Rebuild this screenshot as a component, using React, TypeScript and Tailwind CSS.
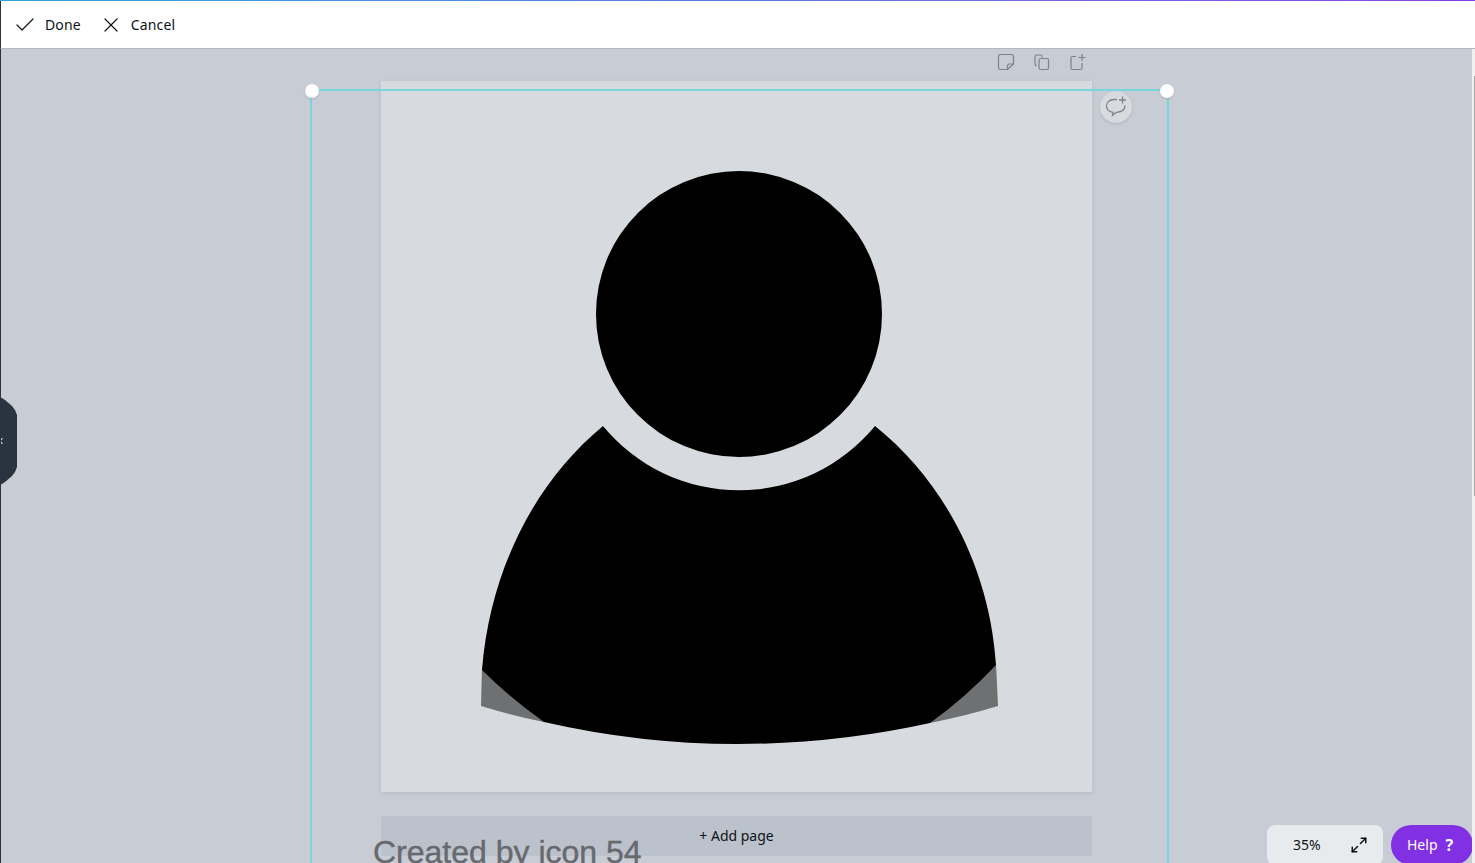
import { Check, ChevronLeft, Maximize2, X } from "lucide-react";

const uiFont = "font-['Noto_Sans','Open_Sans',sans-serif]";

function PersonIcon() {
  return (
    <svg viewBox="381 81 711 711" className="h-full w-full">
      {/* faded corners of the cropped shoulders */}
      <path d="M482 668 L481 706 Q510 715 544 722 L560 700 Z" fill="#6f7072" />
      <path d="M996 663 L998 706 Q965 716 930 723 L915 700 Z" fill="#6f7072" />
      <circle cx="739" cy="314" r="143" fill="#000" />
      <path
        d="M603 426 A176 176 0 0 0 875 426 C945 482 990 570 996 665 Q965 698 930 723 Q835 744 737 744 Q640 744 544 722 Q510 698 482 670 C490 570 535 482 603 426 Z"
        fill="#000"
      />
    </svg>
  );
}

function NoteIcon() {
  return (
    <svg viewBox="0 0 18 18" className="h-[18px] w-[18px]" fill="none" stroke="#7d828b" strokeWidth="1.2">
      <path d="M3.5 1.500h11a2 2 0 0 1 2 2v7.500l-6 5.500h-7a2 2 0 0 1-2-2v-11a2 2 0 0 1 2-2z" />
      <path d="M10.500 16.500v-3.500a2 2 0 0 1 2-2h4" />
    </svg>
  );
}

function CopyIcon() {
  return (
    <svg viewBox="0 0 18 18" className="h-[18px] w-[18px]" fill="none" stroke="#7d828b" strokeWidth="1.2">
      <path d="M4 12.500h-.500a1.500 1.500 0 0 1-1.500-1.500v-7.500a1.500 1.500 0 0 1 1.500-1.500h4a1.500 1.500 0 0 1 1.500 1.500v1" />
      <rect x="6" y="5.500" width="9.500" height="11" rx="1.800" />
    </svg>
  );
}

function AddPageIcon() {
  return (
    <svg viewBox="0 0 18 18" className="h-[18px] w-[18px]" fill="none" stroke="#7d828b" strokeWidth="1.2">
      <path d="M7 3.500H3.500a1.500 1.500 0 0 0-1.500 1.500v10a1.500 1.500 0 0 0 1.500 1.500h8a1.500 1.500 0 0 0 1.500-1.500v-5" />
      <path d="M13 1v7M9.500 4.500h7" />
    </svg>
  );
}

function CommentIcon() {
  return (
    <svg viewBox="0 0 24 24" className="h-6 w-6" fill="none" stroke="#7d828b" strokeWidth="1.3">
      <path d="M13 4.500H10c-4.500 0-7.500 2.800-7.500 6.500 0 3.500 2.800 6 6.500 6.300l-.5 3 4-3c4.500-.3 8.500-2.500 8.500-6.800" />
      <path d="M18.500 1.500v7M15 5h7" />
    </svg>
  );
}

function Handle({ className }: { className: string }) {
  return <div className={`absolute h-3.5 w-3.5 rounded-full bg-white shadow ${className}`} />;
}

export default function App() {
  return (
    <div className={`flex h-[863px] w-[1475px] flex-col overflow-hidden bg-[#c8ccd4] ${uiFont}`}>
      <div className="h-px shrink-0 bg-gradient-to-r from-[#2ea3d8] via-[#5b7fe0] to-[#8b3de8]" />
      <header className="flex h-[48px] shrink-0 items-center border-b border-l border-b-[#b3b7bf] border-l-[#2a3340] bg-white pl-[12px] text-sm text-[#0e1318]">
        <button className="flex items-center gap-[8px] pt-[1px] tracking-[0.01em]">
          <Check size={24} strokeWidth={1.2} />
          Done
        </button>
        <button className="ml-[18px] flex items-center gap-[8px] pt-[1px] tracking-[0.01em]">
          <X size={24} strokeWidth={1.2} />
          Cancel
        </button>
      </header>

      <main className="relative flex flex-1 overflow-hidden border-l border-[#2a3340]">
        <div className="flex flex-1 flex-col items-center pt-[32px] pr-[3px]">
          <div className="relative h-[711px] w-[711px] shrink-0 bg-[#d7dadf] shadow-[0_1px_4px_rgba(60,70,90,0.12)]">
            <PersonIcon />
          </div>
          <button className="mt-6 h-10 w-[711px] shrink-0 rounded-[3px] bg-[#bcc2cb] text-sm text-[#0e1318]">
            + Add page
          </button>
        </div>

        {/* page actions */}
        <div className="absolute left-[996px] top-[4px] flex gap-[18px]">
          <NoteIcon />
          <CopyIcon />
          <AddPageIcon />
        </div>

        {/* selection frame */}
        <div className="absolute left-[309px] top-[40px] h-[900px] w-[859px] border-2 border-[#78d7dd]">
          <Handle className="-left-[7px] -top-[7px]" />
          <Handle className="-right-[7px] -top-[7px]" />
        </div>

        <div className="absolute left-[1099px] top-[42px] flex h-8 w-8 items-center justify-center rounded-full bg-[#d7dadf] shadow-sm">
          <CommentIcon />
        </div>

        <div className="absolute left-[372px] top-[784px] font-['Liberation_Sans',sans-serif] text-[32px] leading-[38px] whitespace-nowrap text-[#66696e] [-webkit-text-stroke:0.4px_#66696e]">
          Created by icon 54
        </div>

        {/* sidebar collapse tab */}
        <div className="absolute -left-px top-[348px] flex h-[88px] w-[17px] items-center bg-[#2a3340] [clip-path:polygon(0_0,5px_3px,12px_9px,15px_13px,17px_18px,17px_70px,15px_75px,12px_79px,5px_85px,0_88px)]">
          <ChevronLeft size={10} strokeWidth={2.5} color="#fff" className="-ml-[4px]" />
        </div>

        {/* zoom + help */}
        <div className="absolute -bottom-[2px] left-[1266px] flex h-[40px] w-[116px] items-center rounded-lg bg-[#e8ebee] pl-[26px] text-sm text-[#0e1318]">
          35%
          <Maximize2 size={18} strokeWidth={2} className="ml-[29px]" />
        </div>
        <div className="absolute -bottom-[2px] left-[1390px] flex h-[40px] w-[82px] items-center rounded-[20px] bg-[#8230e4] pl-[16px] text-sm text-white">
          Help
          <span className="ml-2 text-base leading-none font-bold">?</span>
        </div>

        {/* scrollbar */}
        <div className="absolute inset-y-0 right-0 w-[3px] bg-[#f1f1f1]">
          <div className="mt-[27px] ml-[2px] h-[420px] w-px bg-[#a8a8a8]" />
        </div>
      </main>
    </div>
  );
}
